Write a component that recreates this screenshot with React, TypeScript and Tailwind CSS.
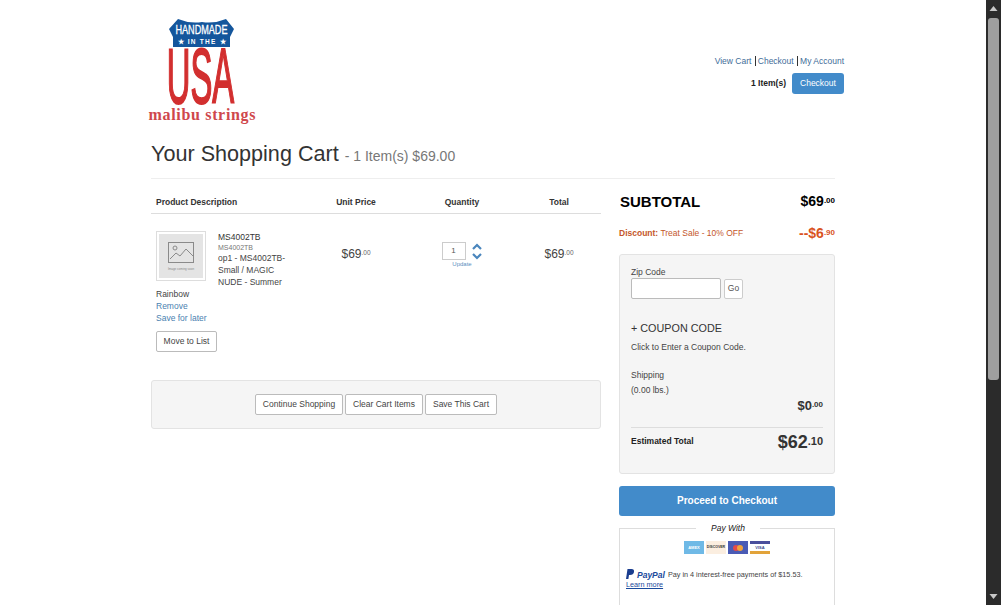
import React from "react";

function Price({ whole, cents, className, centsClass }: { whole: string; cents: string; className: string; centsClass: string }) {
  return (
    <span className={className}>
      {whole}
      <span className={centsClass}>{cents}</span>
    </span>
  );
}

function Logo() {
  return (
    <svg width="108" height="108" viewBox="0 0 108 108" className="block">
      <path d="M21 12L30 2Q42 7 54 5Q66 7 78 2L86 12L82 20V30H25V20Z" fill="#14569c" />
      <text x="53.5" y="16.5" textAnchor="middle" fontFamily="Liberation Sans" fontSize="12.5" fill="#fff" stroke="#fff" strokeWidth="0.3" textLength="52" lengthAdjust="spacingAndGlyphs">HANDMADE</text>
      <text x="53.5" y="27" textAnchor="middle" fontFamily="Liberation Sans" fontWeight="700" fontSize="6.5" fill="#fff" textLength="48" lengthAdjust="spacing">★ IN THE ★</text>
      <text transform="translate(52.5 86) scale(0.42 1)" textAnchor="middle" fontFamily="Liberation Sans" fontSize="78" fill="#d22f2f" stroke="#d22f2f" strokeWidth="2">USA</text>
      <text x="54" y="103" textAnchor="middle" fontFamily="Liberation Serif" fontWeight="700" fontSize="16" fill="#cf474c" textLength="107" lengthAdjust="spacing">malibu strings</text>
    </svg>
  );
}

function CartItem() {
  return (
    <div className="grid grid-cols-[165px_80px_132px_62px] text-[#333]">
      <div className="pl-[5px] pt-[17px]">
        <div className="w-[135px] text-[8.5px] leading-[12px]">
          <div className="float-left mr-3 h-[50px] w-[50px] border border-[#ddd] p-[2px]">
            <div className="flex h-full flex-col items-center justify-center bg-[#e4e4e4]">
              <svg width="28" height="24" viewBox="0 0 28 24" fill="none" stroke="#8a8a8a" strokeWidth="1">
                <rect x="1.5" y="1.5" width="25" height="20" />
                <circle cx="8" cy="7" r="2" />
                <path d="M3 18L9 12L13 15L19 8L26 15" />
              </svg>
              <span className="mt-[3px] text-[3px] leading-[3px] text-[#888]">Image coming soon</span>
            </div>
          </div>
          <div>MS4002TB</div>
          <div className="text-[7px] leading-[9px] text-[#777]">MS4002TB</div>
          <div className="text-[#444]">op1 - MS4002TB- Small / MAGIC NUDE - Summer Rainbow</div>
        </div>
        <div className="text-[8.5px] leading-[12px] text-[#4a7fb0]">Remove</div>
        <div className="text-[8.5px] leading-[12px] text-[#4a7fb0]">Save for later</div>
        <button className="mt-[7px] h-[21px] w-[61px] rounded-[2px] border border-[#bbb] bg-white text-[8.5px] text-[#444]">Move to List</button>
      </div>
      <div className="pt-[27px] text-center">
        <Price whole="$69" cents=".00" className="text-[12px] text-[#444]" centsClass="align-[3px] text-[6.5px] text-[#666]" />
      </div>
      <div className="flex flex-col items-center pt-[28px]">
        <div className="mr-px flex items-center gap-[6px]">
          <div className="flex h-[18px] w-[24px] items-center justify-center border border-[#ccc] bg-white text-[8px] text-[#555]">1</div>
          <svg width="10" height="17" viewBox="0 0 10 17" fill="none" stroke="#4a86bd" strokeWidth="2.2">
            <path d="M1 6L5 2L9 6" />
            <path d="M1 11L5 15L9 11" />
          </svg>
        </div>
        <span className="text-[6px] leading-[8px] text-[#5b8fc0]">Update</span>
      </div>
      <div className="pt-[27px] text-center">
        <Price whole="$69" cents=".00" className="text-[12px] text-[#444]" centsClass="align-[3px] text-[6.5px] text-[#666]" />
      </div>
    </div>
  );
}

function Summary() {
  return (
    <div className="w-[216px]">
      <div className="flex h-[46px] items-center justify-between pl-px">
        <span className="text-[15px] font-bold text-black">SUBTOTAL</span>
        <Price whole="$69" cents=".00" className="-mt-[1px] text-[14px] font-bold text-black" centsClass="align-[3px] text-[8px]" />
      </div>
      <div className="-mt-[2px] flex h-[20px] items-center justify-between text-[#c4562a]">
        <span className="text-[8.5px]"><b>Discount:</b> Treat Sale - 10% OFF</span>
        <Price whole="--$6" cents=".90" className="text-[14px] font-bold text-[#d9531e]" centsClass="align-[3px] text-[8px]" />
      </div>
      <div className="mt-[11px] h-[220px] rounded-[3px] border border-[#e3e3e3] bg-[#f5f5f5] px-[11px] pt-3 text-[8.5px] text-[#444]">
        <div className="leading-[11px]">Zip Code</div>
        <div className="flex items-center gap-[3px]">
          <div className="h-[21px] w-[90px] rounded-[2px] border border-[#bbb] bg-white" />
          <button className="h-[20px] w-[19px] rounded-[2px] border border-[#ccc] bg-white text-[8.5px] text-[#555]">Go</button>
        </div>
        <div className="mt-[21px] text-[10.8px] leading-[16px] text-[#333]">+ COUPON CODE</div>
        <div className="mt-[5px] leading-[12px]">Click to Enter a Coupon Code.</div>
        <div className="mt-[16px] leading-[12px]">Shipping</div>
        <div className="mt-[3px] leading-[12px]">(0.00 lbs.)</div>
        <div className="mt-[1px] text-right leading-[16px]">
          <Price whole="$0" cents=".00" className="text-[13px] font-bold text-[#333]" centsClass="align-[3px] text-[8px]" />
        </div>
        <div className="mt-[12px] flex h-[26px] items-center justify-between border-t border-[#ddd]">
          <span className="mt-[1px] font-bold text-[#222]">Estimated Total</span>
          <Price whole="$62" cents=".10" className="mt-[4px] text-[18px] font-bold text-[#333]" centsClass="align-[3px] text-[11px]" />
        </div>
      </div>
      <button className="mt-3 h-[30px] w-full rounded-[3px] bg-[#428bca] pb-px text-[10px] font-bold text-white">Proceed to Checkout</button>
      <div className="relative mt-3 h-[100px] border border-[#ddd] px-[6px]">
        <span className="absolute -top-[6px] left-[76px] bg-white px-[15px] text-[8.5px] leading-[11px] text-[#222] italic">Pay With</span>
        <div className="mt-3 flex justify-center gap-[2px]">
          <div className="flex h-[13px] w-[20px] items-center justify-center bg-[#6fb9e6] text-[4px] font-bold text-white">AMEX</div>
          <div className="flex h-[13px] w-[20px] items-center justify-center bg-[#fbeee0] text-[3.5px] font-bold text-[#333]">DISCOVER</div>
          <div className="relative h-[13px] w-[20px] bg-[#4a5bb5]">
            <div className="absolute top-[4px] left-[5px] h-[6px] w-[6px] rounded-full bg-[#e24b4b]" />
            <div className="absolute top-[4px] left-[9px] h-[6px] w-[6px] rounded-full bg-[#f0a33c]" />
          </div>
          <div className="flex h-[13px] w-[20px] flex-col">
            <div className="h-[3px] bg-[#4a4f9c]" />
            <div className="flex flex-1 items-center justify-center bg-white text-[4px] font-bold text-[#3a4a8c]">VISA</div>
            <div className="h-[3px] bg-[#e2a33a]" />
          </div>
        </div>
        <div className="mt-[15px] flex items-center text-[7.25px] leading-[10px] text-[#444]">
          <svg width="9" height="11" viewBox="0 0 9 11" className="mr-[2px] shrink-0">
            <path d="M1.5 0H5.5Q8.5 0 8 3T4 6H3L2.4 10H0Z" fill="#1a3d8f" />
          </svg>
          <span className="mr-[3px] text-[8.5px] font-bold text-[#1a4a9c] italic">PayPal</span>
          <span>Pay in 4 interest-free payments of $15.53.</span>
        </div>
        <div className="text-[7.25px] leading-[10px] text-[#1a4a9c] underline">Learn more</div>
      </div>
    </div>
  );
}

export default function App() {
  return (
    <div className="flex h-[605px] overflow-hidden bg-white font-['Liberation_Sans',Arial,sans-serif]">
      <main className="w-[986px] shrink-0">
        <div className="mx-auto w-[684px]">

          {/* Header */}
          <header className="flex h-[135px] items-start justify-between">
            <div className="mt-[17px] -ml-[3px]">
              <Logo />
            </div>
            <div className="-mr-[9px] flex flex-col items-end pt-[56px]">
              <div className="text-[8.5px] leading-[11px] text-[#3f6d99]">
                View Cart <span className="ml-px border-l border-[#333] pl-[2px]">Checkout</span> <span className="ml-px border-l border-[#333] pl-[2px]">My Account</span>
              </div>
              <div className="mt-[6px] flex items-center gap-[6px]">
                <span className="text-[8.5px] font-bold text-[#222]">1 Item(s)</span>
                <button className="h-[21px] w-[52px] rounded-[3px] bg-[#428bca] text-[8.5px] text-white">Checkout</button>
              </div>
            </div>
          </header>

          {/* Title */}
          <div className="flex h-[44px] items-center border-b border-[#eee] pb-[6px]">
            <h1 className="text-[21.6px] leading-[28px] text-[#333]">Your Shopping Cart</h1>
            <span className="mt-[6px] ml-[6px] text-[14px] text-[#777]">- 1 Item(s) $69.00</span>
          </div>

          <div className="flex justify-between">

            {/* Cart */}
            <div className="w-[450px]">
              <div className="grid h-[35px] grid-cols-[165px_80px_132px_62px] items-center border-b border-[#ddd] pt-[12px] text-[8.5px] font-bold text-[#333]">
                <div className="pl-[5px]">Product Description</div>
                <div className="text-center">Unit Price</div>
                <div className="text-center">Quantity</div>
                <div className="text-center">Total</div>
              </div>
              <CartItem />
              <div className="mt-[28px] flex h-[49px] items-center justify-center gap-[2px] rounded-[3px] border border-[#e3e3e3] bg-[#f5f5f5]">
                <button className="h-[21px] w-[88px] rounded-[2px] border border-[#bbb] bg-white text-[8.5px] text-[#444]">Continue Shopping</button>
                <button className="h-[21px] w-[78px] rounded-[2px] border border-[#bbb] bg-white text-[8.5px] text-[#444]">Clear Cart Items</button>
                <button className="h-[21px] w-[72px] rounded-[2px] border border-[#bbb] bg-white text-[8.5px] text-[#444]">Save This Cart</button>
              </div>
            </div>

            <Summary />
          </div>
        </div>
      </main>

      {/* Scrollbar */}
      <div className="flex w-[15px] shrink-0 flex-col items-center bg-[#2b2b2b]">
        <svg width="9" height="18" viewBox="0 0 9 18" className="shrink-0">
          <path d="M4.5 6L8.5 11H0.5Z" fill="#c8c8c8" />
        </svg>
        <div className="h-[362px] w-[11px] shrink-0 rounded-[3px] bg-[#9f9f9f]" />
        <div className="flex-1" />
        <svg width="9" height="18" viewBox="0 0 9 18" className="shrink-0">
          <path d="M4.5 12L8.5 7H0.5Z" fill="#c8c8c8" />
        </svg>
      </div>
    </div>
  );
}
